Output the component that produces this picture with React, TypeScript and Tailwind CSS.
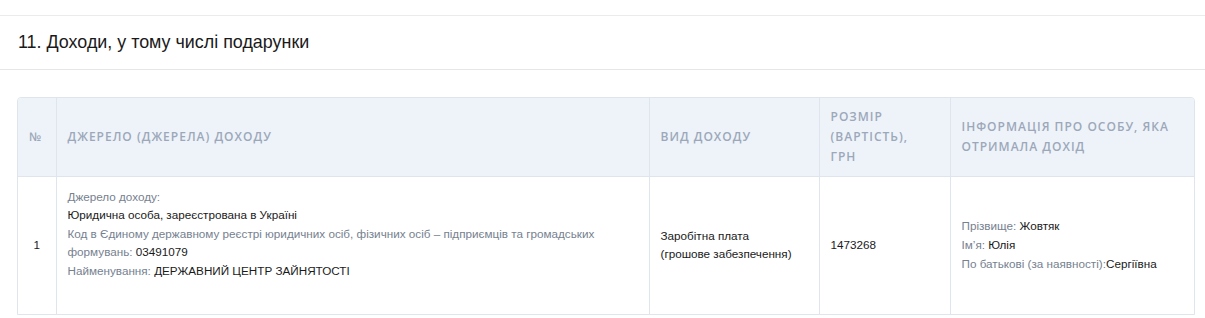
import React from 'react';

type Field = { label: string; value?: string };

const headers = [
  { title: '№', className: 'w-[38px] text-center' },
  { title: 'Джерело (джерела) доходу', className: 'w-[593px]' },
  { title: 'Вид доходу', className: 'w-[170px]' },
  { title: 'Розмір (вартість), грн', className: 'w-[131px]' },
  { title: 'Інформація про особу, яка отримала дохід', className: '' },
];

const source: Field[] = [
  { label: 'Джерело доходу:' },
  { label: '', value: 'Юридична особа, зареєстрована в Україні' },
  {
    label:
      'Код в Єдиному державному реєстрі юридичних осіб, фізичних осіб – підприємців та громадських формувань: ',
    value: '03491079',
  },
  { label: 'Найменування: ', value: 'ДЕРЖАВНИЙ ЦЕНТР ЗАЙНЯТОСТІ' },
];

const person: Field[] = [
  { label: 'Прізвище: ', value: 'Жовтяк' },
  { label: 'Ім’я: ', value: 'Юлія' },
  { label: 'По батькові (за наявності):', value: 'Сергіївна' },
];

function FieldLine({ label, value }: Field) {
  return (
    <div>
      {label && <span className="text-[#76818f]">{label}</span>}
      {value && <span className="text-[#1a1a1a]">{value}</span>}
    </div>
  );
}

export default function App() {
  return (
    <div className="min-h-[318px] bg-white font-['Liberation_Sans',Arial,sans-serif]">
      <div className="h-[16px] border-b border-[#ebebeb]" />
      <div className="flex h-[54px] items-center border-b border-[#e6e6e6] px-[18px]">
        <h2 className="text-[17.9px] text-[#1a1a1a]">
          11. Доходи, у тому числі подарунки
        </h2>
      </div>

      <div className="mr-[10px] ml-[17px] mt-[27px] overflow-hidden rounded-t-[4px] border border-[#dfe5ec]">
        <table className="w-full table-fixed border-collapse">
          <thead>
            <tr className="h-[78px] bg-[#eef3f9]">
              {headers.map((h, i) => (
                <th
                  key={h.title}
                  className={`pr-[14px] pl-[11px] text-left align-middle font-['Open_Sans',sans-serif] text-[12px] leading-[20px] font-semibold tracking-[1px] text-[#9ca8ba] uppercase ${
                    i > 0 ? 'border-l border-[#dfe5ec]' : 'pr-[11px]'
                  } ${h.className}`}
                >
                  {h.title}
                </th>
              ))}
            </tr>
          </thead>
          <tbody className="text-[11.7px] leading-[18.6px]">
            <tr className="border-t border-[#dfe5ec]">
              <td className="text-center align-middle text-[#1a1a1a]">1</td>
              <td className="border-l border-[#dfe5ec] px-[11px] pt-[11px] pb-[15px] align-middle">
                {source.map((f, i) => (
                  <FieldLine key={i} {...f} />
                ))}
                <div>&nbsp;</div>
              </td>
              <td className="border-l border-[#dfe5ec] px-[11px] align-middle text-[#1a1a1a]">
                Заробітна плата
                <br />
                (грошове забезпечення)
              </td>
              <td className="border-l border-[#dfe5ec] px-[11px] align-middle text-[#1a1a1a]">
                1473268
              </td>
              <td className="border-l border-[#dfe5ec] px-[11px] align-middle">
                {person.map((f, i) => (
                  <FieldLine key={i} {...f} />
                ))}
              </td>
            </tr>
          </tbody>
        </table>
      </div>
    </div>
  );
}
